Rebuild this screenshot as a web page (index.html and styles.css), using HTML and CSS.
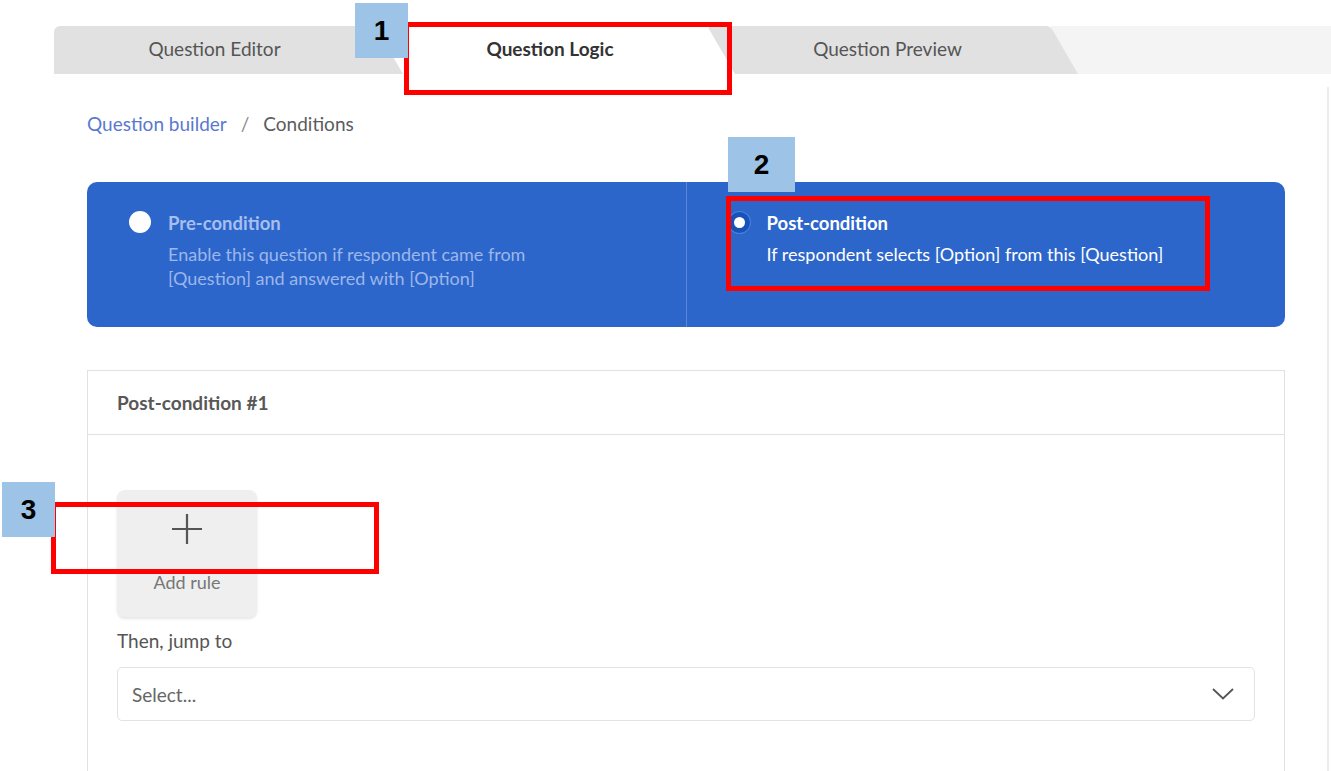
FILE: index.html
```html
<!DOCTYPE html>
<html>
<head>
    <link rel="stylesheet" href="styles.css">
</head>
<body>
    <div class="page">
        <div class="tabs">
            <div class="tab tab-editor">Question Editor</div>
            <div class="tab tab-logic active">Question Logic</div>
            <div class="tab tab-preview">Question Preview</div>
            <div class="tab-rest"></div>
        </div>

        <div class="content">
            <div class="breadcrumb">
                <a class="crumb-link">Question builder</a>
                <span class="crumb-sep">/</span>
                <span class="crumb-current">Conditions</span>
            </div>

            <div class="condition-type">
                <div class="type-option">
                    <span class="radio"></span>
                    <div class="type-text">
                        <div class="type-title">Pre-condition</div>
                        <div class="type-desc">Enable this question if respondent came from<br>[Question] and answered with [Option]</div>
                    </div>
                </div>
                <div class="type-option selected">
                    <span class="radio"></span>
                    <div class="type-text">
                        <div class="type-title">Post-condition</div>
                        <div class="type-desc">If respondent selects [Option] from this [Question]</div>
                    </div>
                </div>
            </div>

            <div class="card">
                <div class="card-header">Post-condition #1</div>
                <div class="card-body">
                    <button class="add-rule">
                        <svg class="plus" width="32" height="32" viewBox="0 0 32 32">
                            <path d="M16 1 V31 M1 16 H31" stroke="#555" stroke-width="2.2" fill="none"/>
                        </svg>
                        <span>Add rule</span>
                    </button>
                    <div class="field-label">Then, jump to</div>
                    <div class="select">
                        <span>Select...</span>
                        <svg width="22" height="12" viewBox="0 0 22 12">
                            <path d="M1 1 L11 10.5 L21 1" stroke="#555" stroke-width="1.8" fill="none"/>
                        </svg>
                    </div>
                </div>
            </div>
        </div>

        <!-- callouts -->
        <div class="mark mark-1"></div>
        <div class="mark mark-2"></div>
        <div class="mark mark-3"></div>
        <div class="step step-1">1</div>
        <div class="step step-2">2</div>
        <div class="step step-3">3</div>
    </div>
</body>
</html>
```

FILE: styles.css
```css
body {
    margin: 0;
    overflow: hidden;
    background: #fff;
    font-family: Lato, "Open Sans", sans-serif;
    font-size: 19px;
    color: #555;
}

.page {
    position: relative;
    padding-top: 26px;
    height: 745px;
}

/* tabs */

.tabs {
    display: flex;
    height: 48px;
    margin-left: 54px;
}

.tab {
    position: relative;
    display: flex;
    align-items: center;
    justify-content: center;
    background: #e1e1e1;
    color: #555;
    border-radius: 6px 0 0 0;
    clip-path: polygon(0 0, calc(100% - 30px) 0, calc(100% - 26px) 3px, 100% 100%, 0 100%);
    padding: 0 28px 3px 18px;
    box-sizing: border-box;
}

.tab-editor {
    width: 349px;
    padding-left: 0;
    z-index: 3;
}

.tab-logic {
    width: 360px;
    margin-left: -28px;
    z-index: 2;
}

.tab-preview {
    width: 371px;
    margin-left: -28px;
    z-index: 1;
}

.tab.active {
    background: #fff;
    color: #333;
    font-weight: 700;
}

.tab-rest {
    flex: 1;
    margin-left: -28px;
    background: #f4f4f4;
}

/* content */

.content {
    margin: 13px 0 0 54px;
    width: 1275px;
    border-right: 2px solid #ececec;
    padding: 25px 42px 0 33px;
    box-sizing: border-box;
    height: 700px;
}

.breadcrumb {
    line-height: 24px;
    display: flex;
    gap: 14px;
}

.crumb-link {
    color: #5a78cf;
}

.crumb-sep {
    color: #888;
}

.crumb-current {
    color: #5c5c5c;
}

.condition-type {
    margin-top: 46px;
    display: flex;
    height: 145px;
    background: #2d66cb;
    border-radius: 10px;
    font-size: 18px;
}

.type-option {
    flex: 1;
    display: flex;
    align-items: flex-start;
    gap: 17px;
    padding: 29px 0 0 42px;
}

.type-option + .type-option {
    border-left: 1px solid rgba(255, 255, 255, 0.22);
}

.radio {
    width: 22px;
    height: 22px;
    border-radius: 50%;
    background: #fff;
    box-sizing: border-box;
    flex-shrink: 0;
}

.selected .radio {
    width: 21px;
    height: 21px;
    margin-top: 1px;
    background: #fff;
    border: 5px solid #1553bb;
    box-shadow: 0 0 0 1px #4c7fd6;
}

.type-title {
    font-weight: 700;
    font-size: 18.5px;
    line-height: 24px;
    color: #a7bfee;
    margin-bottom: 7px;
}

.type-desc {
    line-height: 24px;
    color: #9cb7ea;
}

.selected .type-title,
.selected .type-desc {
    color: #fff;
}

/* card */

.card {
    margin-top: 43px;
    border: 1px solid #e2e2e2;
    border-bottom: none;
    height: 420px;
}

.card-header {
    height: 63px;
    line-height: 63px;
    padding-left: 29px;
    border-bottom: 1px solid #e2e2e2;
    font-weight: 700;
    color: #585858;
}

.card-body {
    padding: 55px 29px 0 29px;
}

.add-rule {
    width: 140px;
    height: 127px;
    background: #efefef;
    border: none;
    border-radius: 8px;
    box-shadow: 0 2px 3px rgba(0, 0, 0, 0.1);
    display: flex;
    flex-direction: column;
    align-items: center;
    padding-top: 23px;
    box-sizing: border-box;
    font-family: inherit;
    font-size: 18px;
    color: #777;
    cursor: pointer;
}

.add-rule span {
    margin-top: 26px;
    line-height: 22px;
}

.field-label {
    margin-top: 13px;
    line-height: 22px;
    color: #555;
}

.select {
    margin-top: 15px;
    height: 54px;
    border: 1.5px solid #e3e3e3;
    border-radius: 5px;
    box-sizing: border-box;
    display: flex;
    align-items: center;
    justify-content: space-between;
    padding: 0 20px 0 14px;
    color: #666;
}

/* callouts */

.mark {
    position: absolute;
    z-index: 10;
    border: 5px solid #ff0000;
    box-sizing: border-box;
}

.mark-1 {
    left: 404px;
    top: 22px;
    width: 328px;
    height: 73px;
}

.mark-2 {
    left: 726px;
    top: 196px;
    width: 484px;
    height: 95px;
}

.mark-3 {
    left: 51px;
    top: 502px;
    width: 328px;
    height: 72px;
}

.step {
    position: absolute;
    z-index: 11;
    background: #9dc3e6;
    color: #000;
    font-family: "Liberation Sans", Arial, sans-serif;
    font-weight: 700;
    font-size: 28px;
    display: flex;
    align-items: center;
    justify-content: center;
    height: 55px;
}

.step-1 {
    left: 355px;
    top: 3px;
    width: 53px;
}

.step-2 {
    left: 728px;
    top: 137px;
    width: 67px;
}

.step-3 {
    left: 2px;
    top: 482px;
    width: 53px;
}
```
